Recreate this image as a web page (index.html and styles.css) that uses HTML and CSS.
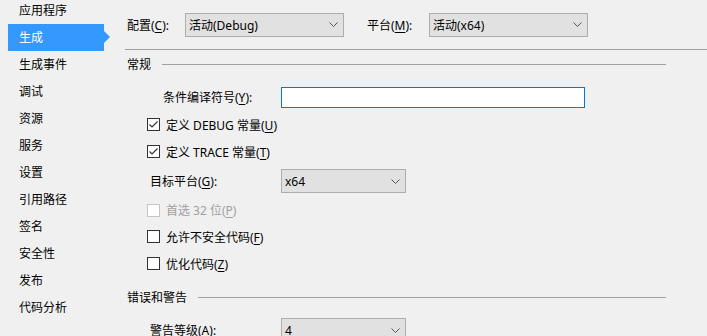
FILE: index.html
```html
<!DOCTYPE html>
<html>
<head>
    <meta charset="UTF-8">
    <title>项目属性</title>
    <link rel="stylesheet" href="styles.css">
</head>
<body>
<div class="window">
    <ul class="nav">
        <li>应用程序</li>
        <li class="active">生成</li>
        <li>生成事件</li>
        <li>调试</li>
        <li>资源</li>
        <li>服务</li>
        <li>设置</li>
        <li>引用路径</li>
        <li>签名</li>
        <li>安全性</li>
        <li>发布</li>
        <li>代码分析</li>
    </ul>

    <div class="page">
        <div class="toolbar">
            <span class="tb-label">配置(<u>C</u>):</span>
            <div class="combo combo-wide">
                <span>活动(Debug)</span>
                <svg class="chev" width="9" height="5" viewBox="0 0 9 5"><polyline points="0.5,0.5 4.5,4.5 8.5,0.5" fill="none" stroke="#555" stroke-width="1"/></svg>
            </div>
            <span class="tb-label tb-platform">平台(<u>M</u>):</span>
            <div class="combo combo-wide">
                <span>活动(x64)</span>
                <svg class="chev" width="9" height="5" viewBox="0 0 9 5"><polyline points="0.5,0.5 4.5,4.5 8.5,0.5" fill="none" stroke="#555" stroke-width="1"/></svg>
            </div>
        </div>

        <div class="content">
            <div class="group-title"><span>常规</span><i class="rule"></i></div>

            <div class="row row-symbols">
                <label class="field-label wide" for="symbols">条件编译符号(<u>Y</u>):</label>
                <input type="text" id="symbols" class="textbox">
            </div>

            <div class="row check-row">
                <span class="box checked"><svg width="11" height="11" viewBox="0 0 11 11"><polyline points="1.5,5.5 4,8 9.5,2.5" fill="none" stroke="#333" stroke-width="1.2"/></svg></span>
                <span>定义 DEBUG 常量(<u>U</u>)</span>
            </div>
            <div class="row check-row">
                <span class="box checked"><svg width="11" height="11" viewBox="0 0 11 11"><polyline points="1.5,5.5 4,8 9.5,2.5" fill="none" stroke="#333" stroke-width="1.2"/></svg></span>
                <span>定义 TRACE 常量(<u>T</u>)</span>
            </div>

            <div class="row row-target">
                <span class="field-label">目标平台(<u>G</u>):</span>
                <div class="combo combo-small">
                    <span>x64</span>
                    <svg class="chev" width="9" height="5" viewBox="0 0 9 5"><polyline points="0.5,0.5 4.5,4.5 8.5,0.5" fill="none" stroke="#555" stroke-width="1"/></svg>
                </div>
            </div>

            <div class="row check-row row-prefer disabled">
                <span class="box"></span>
                <span>首选 32 位(<u>P</u>)</span>
            </div>
            <div class="row check-row">
                <span class="box"></span>
                <span>允许不安全代码(<u>F</u>)</span>
            </div>
            <div class="row check-row">
                <span class="box"></span>
                <span>优化代码(<u>Z</u>)</span>
            </div>

            <div class="group-title group-errors"><span>错误和警告</span><i class="rule"></i></div>

            <div class="row row-warn">
                <span class="field-label">警告等级(<u>A</u>):</span>
                <div class="combo combo-small">
                    <span>4</span>
                    <svg class="chev" width="9" height="5" viewBox="0 0 9 5"><polyline points="0.5,0.5 4.5,4.5 8.5,0.5" fill="none" stroke="#555" stroke-width="1"/></svg>
                </div>
            </div>
        </div>
    </div>
</div>
</body>
</html>
```

FILE: styles.css
```css
body {
    margin: 0;
    background-color: #f0f0f0;
    font-family: "Noto Sans", "Noto Sans CJK SC", sans-serif;
    font-size: 12px;
    color: #000;
    overflow: hidden;
}

u {
    text-decoration-thickness: 1px;
    text-underline-offset: 2px;
}

.window {
    display: flex;
    height: 336px;
}

/* left navigation */
.nav {
    list-style: none;
    margin: -3px 0 0 0;
    padding: 0;
    width: 125px;
    flex-shrink: 0;
}

.nav li {
    position: relative;
    height: 27px;
    line-height: 27px;
    margin-left: 8px;
    width: 96px;
    padding-left: 11px;
    box-sizing: border-box;
}

.nav li.active {
    background-color: #3399ff;
    color: #fff;
}

.nav li.active::after {
    content: "";
    position: absolute;
    right: -6px;
    top: 7px;
    border-left: 6px solid #3399ff;
    border-top: 6px solid transparent;
    border-bottom: 6px solid transparent;
}

/* right page */
.page {
    flex: 1;
}

.toolbar {
    display: flex;
    align-items: center;
    height: 49px;
    border-bottom: 1px solid #a0a0a0;
    padding-left: 2px;
    box-sizing: content-box;
}

.tb-label {
    width: 58px;
}

.tb-platform {
    margin-left: 23px;
    width: 62px;
}

.combo {
    display: flex;
    align-items: center;
    justify-content: space-between;
    height: 24px;
    box-sizing: border-box;
    border: 1px solid #adadad;
    background-color: #e1e1e1;
    padding: 0 5px 0 3px;
}

.combo-wide {
    width: 159px;
}

.combo-small {
    width: 125px;
}

.chev {
    display: block;
}

.content {
    margin-right: 41px;
}

.group-title {
    display: flex;
    align-items: center;
    height: 28px;
    padding-left: 2px;
}

.group-title .rule {
    flex: 1;
    height: 1px;
    background-color: #a0a0a0;
    margin-left: 11px;
}

.group-errors {
    height: 40px;
}

.row {
    display: flex;
    align-items: center;
}

.row-symbols {
    height: 33px;
    align-items: flex-start;
    padding-top: 9px;
    box-sizing: border-box;
}

.field-label {
    width: 156px;
    flex-shrink: 0;
    padding-left: 25px;
    box-sizing: border-box;
    line-height: 21px;
}

.field-label.wide {
    padding-left: 38px;
}

.textbox {
    width: 304px;
    height: 21px;
    box-sizing: border-box;
    border: 1px solid #0078d7;
    background: #fff;
    margin: 0;
    padding: 0 3px;
    font: inherit;
    outline: none;
}

.check-row {
    height: 27px;
    padding-left: 22px;
}

.row-prefer {
    height: 26px;
}

.box {
    width: 13px;
    height: 13px;
    box-sizing: border-box;
    border: 1px solid #333;
    background-color: #fff;
    margin-right: 6px;
    display: flex;
    align-items: center;
    justify-content: center;
}

.disabled {
    color: #a0a0a0;
}

.disabled .box {
    border-color: #c5c5c5;
}

.row-target {
    height: 32px;
}

.row-warn {
    height: 24px;
    margin-top: 1px;
}
```
